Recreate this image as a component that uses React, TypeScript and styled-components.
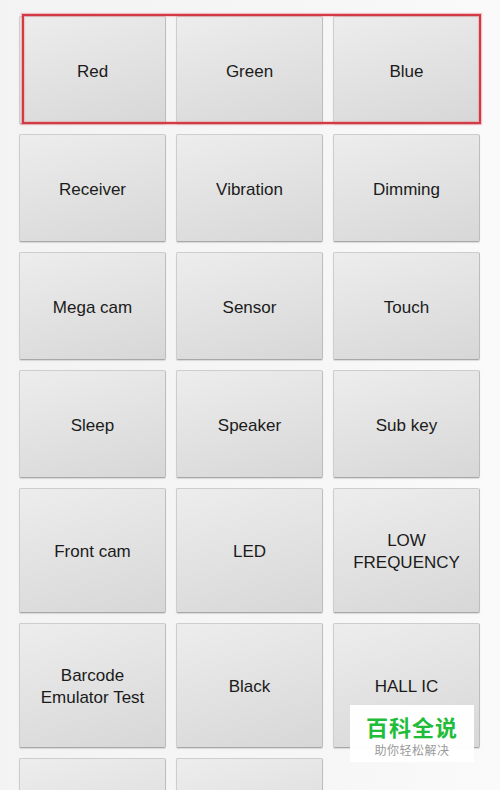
import styled, { createGlobalStyle } from "styled-components";

const GlobalStyle = createGlobalStyle`
  html, body {
    margin: 0;
    padding: 0;
    background: #f4f4f4;
  }
  body {
    width: 500px;
    height: 790px;
    overflow: hidden;
  }
`;

const Page = styled.div`
  position: relative;
  width: 500px;
  height: 790px;
  overflow: hidden;
  box-sizing: border-box;
  padding: 16px 20px 0 19px;
  background: linear-gradient(90deg, #f3f3f3 0%, #f6f6f6 60%, #fafafa 100%);
`;

const Grid = styled.div`
  display: grid;
  grid-template-columns: repeat(3, 147px);
  column-gap: 10px;
  row-gap: 10px;
`;

const TestButton = styled.button`
  min-height: 108px;
  box-sizing: border-box;
  padding: 41px 6px 38px;
  margin: 0;
  display: flex;
  flex-direction: column;
  align-items: center;
  justify-content: center;
  background: linear-gradient(165deg, #ededed 0%, #e3e3e3 45%, #d7d7d7 100%);
  border: 1px solid #cdcdcd;
  border-bottom-color: #a8a8a8;
  border-right-color: #bdbdbd;
  border-radius: 2px;
  box-shadow: 0 1px 1px rgba(0, 0, 0, 0.12);
  font-family: "Liberation Sans", Arial, sans-serif;
  font-size: 17px;
  line-height: 22px;
  color: #1b1b1b;
  text-align: center;
  cursor: pointer;
`;

const Line = styled.span`
  display: block;
  white-space: nowrap;
`;

const Highlight = styled.div`
  position: absolute;
  left: 22px;
  top: 14px;
  width: 459px;
  height: 110px;
  box-sizing: border-box;
  border: 2px solid #d23a45;
  box-shadow: 0 0 1px 1px rgba(235, 120, 130, 0.45), inset 0 0 1px 1px rgba(235, 120, 130, 0.35);
  pointer-events: none;
`;

const Watermark = styled.div`
  position: absolute;
  left: 350px;
  top: 705px;
  width: 124px;
  height: 57px;
  background: rgba(255, 255, 255, 0.96);
  display: flex;
  flex-direction: column;
  align-items: center;
  padding-top: 9px;
  box-sizing: border-box;
`;

const MarkTitle = styled.div`
  font-family: "Noto Sans CJK SC", sans-serif;
  font-weight: 700;
  font-size: 22px;
  line-height: 24px;
  letter-spacing: 1px;
  color: #1fbd3a;
`;

const MarkSub = styled.div`
  margin-top: 5px;
  font-family: "Noto Sans CJK SC", sans-serif;
  font-size: 12px;
  line-height: 13px;
  letter-spacing: 0.5px;
  color: #9a9a9a;
`;

const tests: string[][] = [
  ["Red"],
  ["Green"],
  ["Blue"],
  ["Receiver"],
  ["Vibration"],
  ["Dimming"],
  ["Mega cam"],
  ["Sensor"],
  ["Touch"],
  ["Sleep"],
  ["Speaker"],
  ["Sub key"],
  ["Front cam"],
  ["LED"],
  ["LOW", "FREQUENCY"],
  ["Barcode", "Emulator Test"],
  ["Black"],
  ["HALL IC"],
  [],
  [],
];

export default function App() {
  return (
    <>
      <GlobalStyle />
      <Page>
        <Grid>
          {tests.map((lines, i) => (
            <TestButton key={i}>
              {lines.map((l) => (
                <Line key={l}>{l}</Line>
              ))}
            </TestButton>
          ))}
        </Grid>
        <Highlight />
        <Watermark>
          <MarkTitle>百科全说</MarkTitle>
          <MarkSub>助你轻松解决</MarkSub>
        </Watermark>
      </Page>
    </>
  );
}
